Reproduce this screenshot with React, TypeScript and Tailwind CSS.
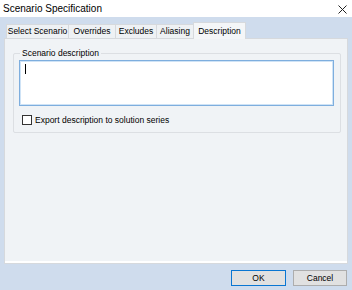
import React from "react";

const font = { fontFamily: '"Liberation Sans", Arial, sans-serif' };

function Tab({ label, w, selected }: { label: string; w: number; selected?: boolean }) {
  if (selected) {
    return (
      <div
        className="h-[17px] flex items-center justify-center bg-[#f4f6f8] border border-b-0 border-[#d6d9dd] text-[8.5px] text-black relative z-10"
        style={{ width: w }}
      >
        {label}
      </div>
    );
  }
  return (
    <div
      className="h-[15px] flex items-center justify-center bg-[#eef1f4] border border-[#d6d9dd] -ml-px first:ml-0 text-[8.5px] text-black"
      style={{ width: w }}
    >
      {label}
    </div>
  );
}

export default function App() {
  return (
    <div className="w-[352px] h-[290px] bg-[#cfdced] flex flex-col overflow-hidden" style={font}>
      <div className="h-[17px] bg-white flex items-center justify-between pl-[3px] pr-[5px] shrink-0">
        <span className="text-[10px] text-black leading-none">Scenario Specification</span>
        <svg width="9" height="9" viewBox="0 0 9 9" className="mt-[1px]">
          <path d="M0.5 0.5 L8.5 8.5 M8.5 0.5 L0.5 8.5" stroke="#222" strokeWidth="1" fill="none" />
        </svg>
      </div>
      <div className="flex flex-col px-[4px] pt-[5px]">
        <div className="flex items-end h-[17px] pl-[2px] -mb-px relative z-10">
          <Tab label="Select Scenario" w={63} />
          <Tab label="Overrides" w={48} />
          <Tab label="Excludes" w={42} />
          <Tab label="Aliasing" w={38} />
          <div className="-ml-px">
            <Tab label="Description" w={53} selected />
          </div>
        </div>
        <div className="h-[226px] bg-[#f0f3f6] border border-[#d6d9dd] shadow-[inset_0_-2px_0_#ffffff] flex flex-col pt-[9px] pl-[8px] pr-[6px]">
          <div className="relative border border-[#dcdfe3] rounded-[2px] h-[80px] pl-[5px] pr-[6px] pt-[6px] mt-[5px]">
            <span className="absolute -top-[7px] left-[6px] bg-[#f0f3f6] px-[2px] text-[8.5px] leading-[12px] text-black">
              Scenario description
            </span>
            <div className="h-[46px] bg-white border border-[#7eaede] shadow-[inset_0_0_0_1px_#cfe3f6] pl-[5px] pt-[3px]">
              <div className="w-px h-[10px] bg-black" />
            </div>
            <div className="flex items-center mt-[9px] ml-[3px] gap-[3px]">
              <div className="w-[10px] h-[10px] bg-white border border-[#333333]" />
              <span className="text-[8.5px] leading-none text-black">Export description to solution series</span>
            </div>
          </div>
        </div>
      </div>
      <div className="flex justify-end gap-[7px] pr-[5px] mt-[6px]">
        <button className="w-[55px] h-[16px] bg-[#e1e1e1] border-[1.5px] border-[#0a76d2] text-[8.5px] text-black flex items-center justify-center">
          OK
        </button>
        <button className="w-[54px] h-[16px] bg-[#e1e1e1] border border-[#adadad] text-[8.5px] text-black flex items-center justify-center">
          Cancel
        </button>
      </div>
    </div>
  );
}
